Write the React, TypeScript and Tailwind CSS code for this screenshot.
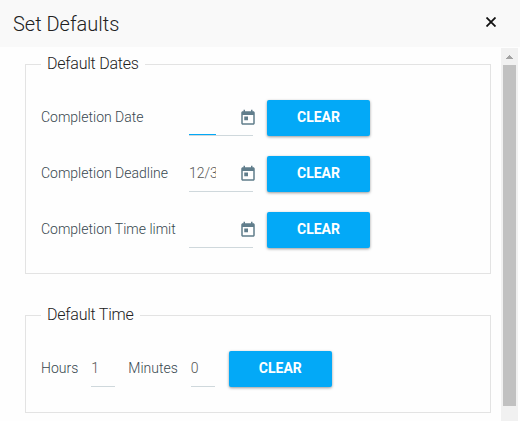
import React from "react";

function CalendarIcon() {
  return (
    <svg viewBox="0 0 24 24" className="w-[18px] h-[18px] shrink-0 fill-[#607d8b]">
      <path d="M19 3h-1V1h-2v2H8V1H6v2H5c-1.11 0-2 .9-2 2v14c0 1.1.89 2 2 2h14c1.1 0 2-.9 2-2V5c0-1.1-.9-2-2-2zm0 16H5V8h14v11zM7 10h5v5H7z" />
    </svg>
  );
}

function ClearButton() {
  return (
    <button
      type="button"
      className="w-[103px] h-9 shrink-0 rounded-[2px] bg-[#03a9f7] pb-0.5 text-white text-sm font-bold shadow-[0_1px_3px_rgba(0,0,0,0.4)]"
    >
      CLEAR
    </button>
  );
}

interface DateRowProps {
  label: string;
  value?: string;
  focused?: boolean;
}

function DateRow({ label, value = "", focused = false }: DateRowProps) {
  return (
    <div className="flex h-9">
      <span className="w-[148px] shrink-0 whitespace-nowrap leading-[35px]">{label}</span>
      <div className="flex w-16 h-9 shrink-0 border-b border-[#cfd8dc]">
        <div
          className={
            focused
              ? "w-[27px] h-[35px] shrink-0 border-b border-[#03a9f7]"
              : "w-[27px] h-[35px] shrink-0 overflow-hidden whitespace-nowrap leading-[35px] text-[#555]"
          }
        >
          {value}
        </div>
        <div className="pl-[23px] pt-[9px]">
          <CalendarIcon />
        </div>
      </div>
      <div className="pl-[14px]">
        <ClearButton />
      </div>
    </div>
  );
}

function TimeField({ label, value }: { label: string; value: string }) {
  return (
    <div className="flex h-9">
      <span className="leading-[35px]">{label}</span>
      <div className="ml-[13px] w-6 h-9 border-b border-[#cfd8dc] leading-[35px] text-[#555]">{value}</div>
    </div>
  );
}

export default function App() {
  return (
    <div className="w-[520px] h-[421px] overflow-hidden flex flex-col bg-[#fefefe] font-['Roboto',sans-serif] font-light text-sm text-[#37474f]">
      {/* Dialog title */}
      <header className="h-[47px] shrink-0 flex items-center justify-between bg-[#f9f9f9] pl-[13px] pr-6 text-[#212121]">
        <h1 className="text-xl">Set Defaults</h1>
        <svg viewBox="0 0 10 10" className="w-[10px] h-[10px] -mt-[3px] stroke-[#111]" fill="none" strokeWidth="1.8">
          <path d="M.5.5l9 9M9.500.5l-9 9" />
        </svg>
      </header>

      <div className="flex-1 flex pt-px min-h-0">
        <main className="w-[501px] pl-[25px] pr-[10px] pt-1">
          <fieldset className="h-[222px] border border-[#e3e3e3] px-[15px]">
            <legend className="h-6 px-1.5 text-base leading-6 tracking-[-0.24px] text-[#212121]">Default Dates</legend>
            <div className="flex flex-col gap-5 pt-6">
              <DateRow label="Completion Date" focused />
              <DateRow label="Completion Deadline" value="12/3" />
              <DateRow label="Completion Time limit" />
            </div>
          </fieldset>

          <fieldset className="mt-[29px] h-[110px] border border-[#e3e3e3] px-[15px]">
            <legend className="h-6 px-1.5 text-base leading-6 tracking-[-0.24px] text-[#212121]">Default Time</legend>
            <div className="flex pt-6">
              <TimeField label="Hours" value="1" />
              <div className="ml-[13px]">
                <TimeField label="Minutes" value="0" />
              </div>
              <div className="ml-[14px]">
                <ClearButton />
              </div>
            </div>
          </fieldset>
        </main>

        {/* Scrollbar */}
        <div className="w-[17px] flex flex-col items-center bg-[#f1f1f1]">
          <svg viewBox="0 0 17 17" className="w-[17px] h-[17px] shrink-0 fill-[#a3a3a3]" shapeRendering="crispEdges">
            <path d="M5 11h7v-1h-1v-1h-1v-1h-1v-1h-1v1h-1v1h-1v1h-1z" />
          </svg>
          <div className="w-[13px] h-[341px] bg-[#c1c1c1]" />
        </div>
      </div>
    </div>
  );
}
